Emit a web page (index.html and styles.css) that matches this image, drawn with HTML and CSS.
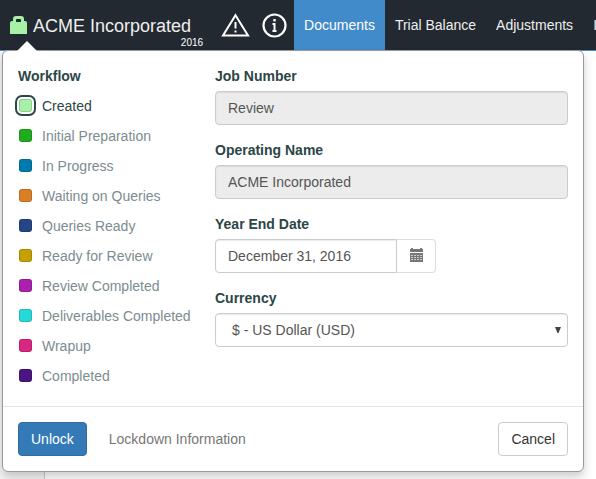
FILE: index.html
```html
<!DOCTYPE html>
<html lang="en">
<head>
<meta charset="utf-8">
<title>ACME Incorporated</title>
<link rel="stylesheet" href="styles.css">
</head>
<body>
<header class="topbar">
  <a class="brand" href="#">
    <svg class="brand-lock" width="17" height="18" viewBox="0 0 17 18" aria-hidden="true"><path fill="#a6f1a6" fill-rule="evenodd" d="M0 7Q0 5 2 5H3V3Q3 0 6 0h5q3 0 3 3v2h1Q17 5 17 7V18H0ZM6 6h5V4q0-1-1-1H7Q6 3 6 4Z"/></svg>
    <span class="brand-text">
      <span class="brand-name">ACME Incorporated</span>
      <span class="brand-year">2016</span>
    </span>
  </a>
  <button class="icon-button" type="button" aria-label="Warnings">
    <svg width="29" height="24" viewBox="0 0 29 24" fill="none" stroke="#fff"><path stroke-width="2" d="M14.500 2.200 27 22.500H2Z"/><path stroke-width="2" d="M14.500 9v6.500M14.500 17.500v2"/></svg>
  </button>
  <button class="icon-button" type="button" aria-label="Information">
    <svg width="25" height="25" viewBox="0 0 25 25" fill="none" stroke="#fff"><circle cx="12.500" cy="12.500" r="11" stroke-width="2.200"/><path stroke-width="2.400" d="M12.500 6v2.500"/><path stroke-width="2" d="M10.500 11h2v7M10.500 18h4"/></svg>
  </button>
  <nav class="tabs">
    <a class="tab tab-active" href="#">Documents</a>
    <a class="tab" href="#">Trial Balance</a>
    <a class="tab" href="#">Adjustments</a>
    <a class="tab" href="#">I</a>
  </nav>
</header>
<main class="page">
  <div class="rail"></div>
</main>
<form class="popover">
  <div class="popover-body">
    <fieldset class="workflow">
      <legend class="heading">Workflow</legend>
      <label class="stage"><input class="swatch created" type="radio" name="stage" checked><span>Created</span></label>
      <label class="stage"><input class="swatch initial" type="radio" name="stage"><span>Initial Preparation</span></label>
      <label class="stage"><input class="swatch progress" type="radio" name="stage"><span>In Progress</span></label>
      <label class="stage"><input class="swatch waiting" type="radio" name="stage"><span>Waiting on Queries</span></label>
      <label class="stage"><input class="swatch queries" type="radio" name="stage"><span>Queries Ready</span></label>
      <label class="stage"><input class="swatch ready" type="radio" name="stage"><span>Ready for Review</span></label>
      <label class="stage"><input class="swatch reviewed" type="radio" name="stage"><span>Review Completed</span></label>
      <label class="stage"><input class="swatch deliverables" type="radio" name="stage"><span>Deliverables Completed</span></label>
      <label class="stage"><input class="swatch wrapup" type="radio" name="stage"><span>Wrapup</span></label>
      <label class="stage"><input class="swatch completed" type="radio" name="stage"><span>Completed</span></label>
    </fieldset>
    <div class="fields">
      <div class="field">
        <label class="heading" for="job">Job Number</label>
        <input class="control" id="job" type="text" value="Review" disabled>
      </div>
      <div class="field">
        <label class="heading" for="name">Operating Name</label>
        <input class="control" id="name" type="text" value="ACME Incorporated" disabled>
      </div>
      <div class="field">
        <label class="heading" for="date">Year End Date</label>
        <div class="date-group">
          <input class="control date-input" id="date" type="text" value="December 31, 2016">
          <button class="date-button" type="button" aria-label="Choose date">
            <svg width="13" height="14" viewBox="0 0 13 14" aria-hidden="true"><path fill="#777" d="M0 1h1V0h2v1h7V0h2v1h1v3H0ZM0 5h13v9H0Z"/><path stroke="#ccc" stroke-dasharray="2 1" d="M1 7.500h11M1 9.500h11M1 11.500h11"/></svg>
          </button>
        </div>
      </div>
      <div class="field">
        <label class="heading" for="currency">Currency</label>
        <div class="select-wrap">
          <select class="control currency" id="currency"><option>$ - US Dollar (USD)</option></select>
          <svg class="select-arrow" width="6" height="6" viewBox="0 0 6 6" aria-hidden="true"><path fill="#444" d="M0 0h6L3.500 6h-1Z"/></svg>
        </div>
      </div>
    </div>
  </div>
  <div class="popover-footer">
    <button class="button button-primary" type="button">Unlock</button>
    <a class="lockdown" href="#">Lockdown Information</a>
    <button class="button button-cancel" type="button">Cancel</button>
  </div>
</form>
</body>
</html>
```
FILE: styles.css
```css
* {
  box-sizing: border-box;
}

body {
  margin: 0;
  min-height: 100vh;
  display: flex;
  flex-direction: column;
  position: relative;
  overflow: hidden;
  background: #fff;
  color: #2b4648;
  font: 14px/20px "Liberation Sans", Arial, sans-serif;
}

a {
  text-decoration: none;
}

button,
input,
select {
  font: inherit;
}

.topbar {
  display: flex;
  align-items: center;
  height: 51px;
  padding-left: 10px;
  background: #222930;
  border-bottom: 1px solid #428bca;
}

.brand {
  display: flex;
  flex: none;
  align-items: flex-start;
  gap: 6px;
  margin-right: 18px;
  padding-top: 16px;
  height: 50px;
}

.brand-text {
  display: flex;
  flex-direction: column;
}

.brand-name {
  padding-right: 12px;
  color: #eee;
  font-size: 18px;
  line-height: 21px;
}

.brand-year {
  color: #fff;
  font-size: 10px;
  line-height: 12px;
  text-align: right;
}

.icon-button {
  display: flex;
  flex: none;
  margin-right: 12px;
  padding: 0;
  border: 0;
  background: none;
}

.icon-button + .tabs {
  margin-left: -5px;
}

.tabs {
  display: flex;
  flex: 1;
  min-width: 0;
  overflow: hidden;
}

.tab {
  flex: none;
  padding: 0 10px;
  color: #eee;
  line-height: 50px;
}

.tab-active {
  background: #428bca;
  color: #fff;
}

.page {
  display: flex;
  flex: 1;
}

.rail {
  width: 45px;
  background: #f5f5f5;
  border-right: 1px solid #ccc;
}

.popover {
  position: absolute;
  top: 50px;
  left: 2px;
  right: 12px;
  background: #fff;
  border: 1px solid #999;
  border-radius: 6px;
  box-shadow: 0 5px 10px rgba(0, 0, 0, 0.2);
}

.popover::before {
  content: "";
  position: absolute;
  top: -10px;
  left: 14px;
  border: 10px solid transparent;
  border-top: 0;
  border-bottom-color: #fff;
}

.popover-body {
  display: grid;
  grid-template-columns: 182px 1fr;
  gap: 15px;
  padding: 15px;
}

.workflow {
  min-width: 0;
  margin: 0;
  padding: 0;
  border: 0;
}

.heading {
  display: block;
  margin-bottom: 5px;
  padding: 0;
  font-weight: bold;
}

.stage {
  display: flex;
  align-items: center;
  gap: 10px;
  height: 30px;
  padding-left: 1px;
  color: #7c8c90;
  white-space: nowrap;
}

.stage:has(:checked) {
  color: #2b4648;
}

.swatch {
  appearance: none;
  flex: none;
  width: 13px;
  height: 13px;
  margin: 0 0 2px;
  border: 1px solid rgba(0, 0, 0, 0.15);
  border-radius: 3px;
}

.swatch:checked {
  box-shadow: 0 0 0 2px #fff, 0 0 0 4px #2b4648;
}

.created { background: #a6f1a6; }
.initial { background: #1fad1f; }
.progress { background: #007bb0; }
.waiting { background: #d98026; }
.queries { background: #264587; }
.ready { background: #c4a000; }
.reviewed { background: #ad1fad; }
.deliverables { background: #26d9d9; }
.wrapup { background: #d9267f; }
.completed { background: #4a1581; }

.fields {
  display: flex;
  flex-direction: column;
  gap: 15px;
  min-width: 0;
}

.control {
  display: block;
  width: 100%;
  height: 34px;
  padding: 6px 12px;
  border: 1px solid #ccc;
  border-radius: 4px;
  background: #fff;
  box-shadow: inset 0 1px 1px rgba(0, 0, 0, 0.08);
  color: #555;
}

.control:disabled {
  background: #ececec;
}

.date-group {
  display: flex;
}

.date-input {
  width: 182px;
  border-radius: 4px 0 0 4px;
}

.date-button {
  display: flex;
  align-items: center;
  justify-content: center;
  width: 39px;
  padding: 0 0 2px;
  border: 1px solid #ddd;
  border-left: 0;
  border-radius: 0 4px 4px 0;
  background: #fff;
}

.select-wrap {
  position: relative;
}

.currency {
  appearance: none;
  padding-left: 16px;
}

.select-arrow {
  position: absolute;
  top: 14px;
  right: 7px;
  pointer-events: none;
}

.popover-footer {
  display: flex;
  align-items: center;
  padding: 15px;
  border-top: 1px solid #e5e5e5;
}

.button {
  height: 34px;
  padding: 0 12px;
  border: 1px solid #ccc;
  border-radius: 4px;
  background: #fff;
  color: #333;
}

.button-primary {
  border-color: #2e6da4;
  background: #337ab7;
  color: #fff;
}

.lockdown {
  margin-left: 22px;
  color: #777;
}

.button-cancel {
  margin-left: auto;
}
```
